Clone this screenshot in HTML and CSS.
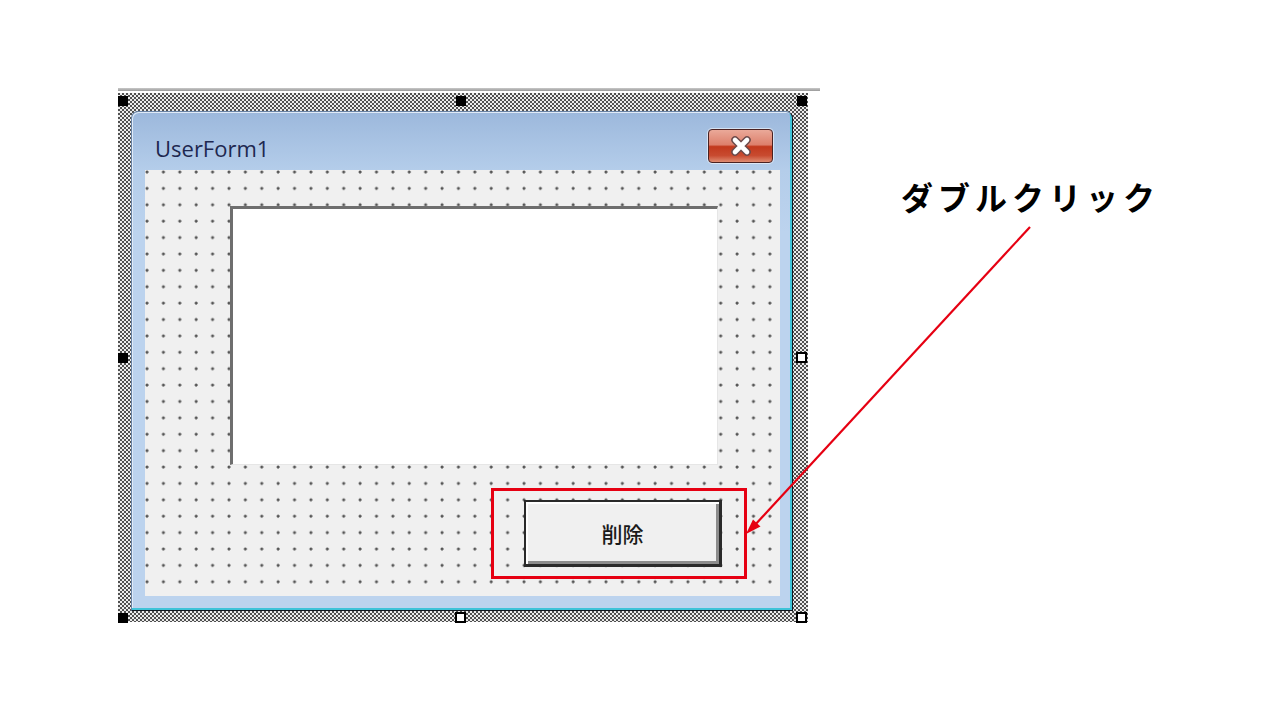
FILE: index.html
```html
<!DOCTYPE html>
<html lang="ja">
<head>
    <meta charset="UTF-8">
    <meta name="viewport" content="width=device-width, initial-scale=1.0">
    <title>UserForm1 - ダブルクリック</title>
    <link rel="stylesheet" href="styles.css">
</head>
<body>
    <div class="slide">
        <div class="ruler"></div>

        <div class="selection">
            <div class="window">
                <div class="titlebar">
                    <span class="title">UserForm1</span>
                    <span class="close">
                        <svg width="28" height="20" viewBox="0 0 28 20">
                            <path d="M8 4l12 12M20 4L8 16" stroke="#6b4a4a" stroke-width="7.5" stroke-linecap="round"/>
                            <path d="M8 4l12 12M20 4L8 16" stroke="#ffffff" stroke-width="4.6" stroke-linecap="round"/>
                        </svg>
                    </span>
                </div>
                <div class="client">
                    <div class="textbox"></div>
                    <div class="cmd">削除</div>
                </div>
            </div>

            <!-- ハンドル -->
            <span class="handle h-tl"></span>
            <span class="handle h-tc"></span>
            <span class="handle h-tr"></span>
            <span class="handle h-ml"></span>
            <span class="handle open h-mr"></span>
            <span class="handle h-bl"></span>
            <span class="handle open h-bc"></span>
            <span class="handle open h-br"></span>
        </div>

        <div class="highlight"></div>

        <svg class="arrow" width="1280" height="720" viewBox="0 0 1280 720">
            <line x1="1030" y1="227" x2="754" y2="526" stroke="#e60012" stroke-width="2.2"/>
            <polygon points="746,534 760.5,526.5 753,519.5" fill="#e60012"/>
        </svg>

        <p class="callout">ダブルクリック</p>
    </div>
</body>
</html>
```

FILE: styles.css
```css
:root {
    --red: #e60012;
    --frame-blue: #bcd3ee;
    --client-bg: #f0f0f0;
}

* {
    margin: 0;
    padding: 0;
    box-sizing: border-box;
}

body {
    background: #ffffff;
    font-family: "Open Sans", "Noto Sans CJK JP", sans-serif;
}

.slide {
    position: relative;
    width: 1280px;
    height: 720px;
    padding-top: 88px;
    overflow: hidden;
}

.ruler {
    margin-left: 118px;
    width: 702px;
    height: 3px;
    background: linear-gradient(#c8c8c8, #9a9a9a);
}

/* 選択枠 */
.selection {
    position: relative;
    margin: 2px 0 0 118px;
    width: 690px;
    height: 529px;
    padding: 18px 15px 11px 13px;
    background:
        radial-gradient(circle at 1px 1px, #505050 0.95px, transparent 1.35px) 0 0 / 4px 4px,
        radial-gradient(circle at 3px 3px, #505050 0.95px, transparent 1.35px) 0 0 / 4px 4px,
        #ececec;
}

.handle {
    position: absolute;
    width: 10px;
    height: 10px;
    background: #000;
    border: 1px solid #000;
}

.handle.open {
    width: 11px;
    height: 11px;
    background: #fff;
    border-width: 2px;
}

.h-tl { left: 0; top: 3px; }
.h-tc { left: 338px; top: 3px; }
.h-tr { left: 679px; top: 3px; }
.h-ml { left: 0; top: 260px; }
.h-mr { left: 678px; top: 259px; }
.h-bl { left: 0; top: 520px; }
.h-bc { left: 337px; top: 519px; }
.h-br { left: 678px; top: 519px; }

/* フォーム */
.window {
    display: flex;
    flex-direction: column;
    height: 100%;
    padding: 0 12px 14px 13px;
    border: 1px solid #6a85a8;
    border-right-color: #101820;
    border-bottom-color: #101820;
    border-radius: 7px 7px 0 0;
    background: linear-gradient(#9cb8dc, #b4cdea 58px, var(--frame-blue) 120px, var(--frame-blue));
    box-shadow: inset -2px -2px 0 #3fc3d8, inset 1px 1px 0 #dfeaf7;
}

.titlebar {
    display: flex;
    justify-content: space-between;
    align-items: flex-start;
    height: 58px;
    margin: 0 -12px 0 -13px;
    padding: 17px 19px 0 23px;
}

.title {
    margin-top: 2px;
    font-size: 22px;
    line-height: 34px;
    color: #1e2850;
}

.close {
    display: flex;
    align-items: center;
    justify-content: center;
    width: 65px;
    height: 34px;
    border: 1px solid #4a2222;
    border-radius: 4px;
    background: linear-gradient(#eaa999 0%, #dd806c 46%, #c2391d 52%, #c84b30 80%, #df8c72 100%);
    box-shadow: 0 0 0 1px rgba(255, 255, 255, 0.55);
}

.client {
    flex: 1;
    padding: 36px 0 0 85px;
    background:
        radial-gradient(circle at 2px 2px, #555555 1.2px, transparent 1.8px) 0 0 / 16.4px 16.4px,
        var(--client-bg);
}

.textbox {
    width: 488px;
    height: 259px;
    background: #ffffff;
    border-top: 3px solid #6e6e6e;
    border-left: 3px solid #6e6e6e;
    border-right: 1px solid #e6e6e6;
    border-bottom: 1px solid #e6e6e6;
}

.cmd {
    display: flex;
    align-items: center;
    justify-content: center;
    width: 198px;
    height: 67px;
    margin: 35px 0 0 294px;
    font-family: "Noto Sans CJK JP", sans-serif;
    font-size: 21px;
    font-weight: 500;
    color: #1a1a1a;
    background: var(--client-bg);
    border: 2px solid #2a2a2a;
    border-right-width: 3px;
    border-bottom-width: 3px;
    box-shadow: inset 2px 2px 0 #ffffff, inset -3px -3px 0 #8c8c8c;
}

/* 注釈 */
.highlight {
    position: absolute;
    left: 491px;
    top: 488px;
    width: 256px;
    height: 91px;
    border: 3px solid var(--red);
}

.arrow {
    position: absolute;
    left: 0;
    top: 0;
    pointer-events: none;
}

.callout {
    position: absolute;
    left: 901px;
    top: 180px;
    font-family: "Noto Sans CJK JP", sans-serif;
    font-size: 32px;
    font-weight: 700;
    line-height: 32px;
    letter-spacing: 5px;
    color: #000000;
    white-space: nowrap;
}
```
